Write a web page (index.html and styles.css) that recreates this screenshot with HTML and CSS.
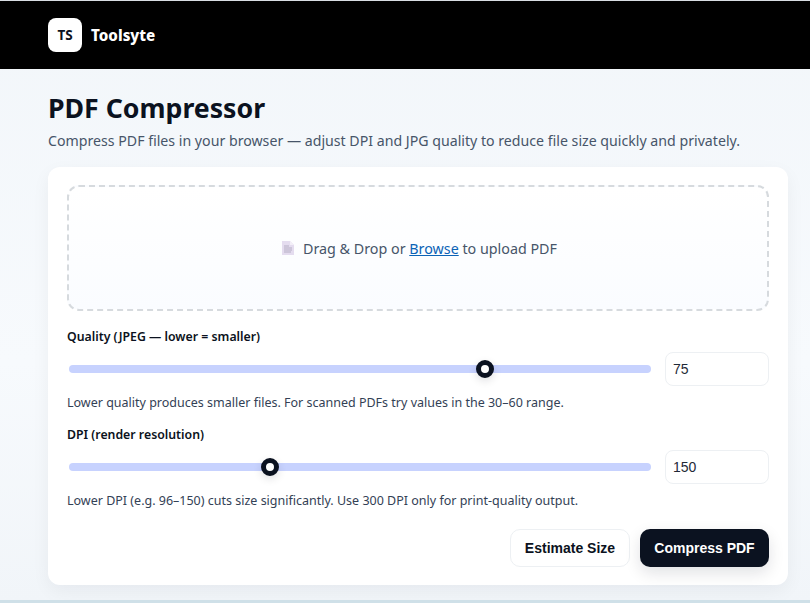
FILE: index.html
```html
<!DOCTYPE html>
<html lang="en">
<head>
    <meta charset="UTF-8">
    <title>PDF Compressor</title>
    <link rel="stylesheet" href="styles.css">
</head>
<body>
    <header class="topbar">
        <div class="logo">TS</div>
        <span class="brand">Toolsyte</span>
    </header>
    <main class="wrap">
        <h1>PDF Compressor</h1>
        <p class="lead">Compress PDF files in your browser — adjust DPI and JPG quality to reduce file size quickly and privately.</p>
        <section class="card">
            <div class="drop">
                <svg class="file-icon" width="12" height="14" viewBox="0 0 12 14">
                    <path d="M0 0H8L12 4V14H0Z" fill="#e4dcef"/>
                    <path d="M8 0L12 4H8Z" fill="#f3eff8"/>
                    <path d="M2 5H7M2 7H10M2 9H10M2 11H9" stroke="#b5aec4" stroke-width="1"/>
                </svg>
                <span>Drag &amp; Drop or <a href="#">Browse</a> to upload PDF</span>
            </div>
            <label class="field-label">Quality (JPEG — lower = smaller)</label>
            <div class="slider-row">
                <input class="range" type="range" min="10" max="100" value="75">
                <input class="num" type="text" value="75">
            </div>
            <p class="hint">Lower quality produces smaller files. For scanned PDFs try values in the 30–60 range.</p>
            <label class="field-label">DPI (render resolution)</label>
            <div class="slider-row">
                <input class="range" type="range" min="72" max="301" value="150">
                <input class="num" type="text" value="150">
            </div>
            <p class="hint">Lower DPI (e.g. 96–150) cuts size significantly. Use 300 DPI only for print-quality output.</p>
            <div class="actions">
                <button class="btn btn-light">Estimate Size</button>
                <button class="btn btn-dark">Compress PDF</button>
            </div>
        </section>
    </main>
    <div class="edge"></div>
</body>
</html>
```

FILE: styles.css
```css
* {
    margin: 0;
    padding: 0;
    box-sizing: border-box;
}
html, body {
    height: 603px;
    overflow: hidden;
}
body {
    font-family: "Noto Sans", "Open Sans", sans-serif;
    color: #0b1220;
    background: linear-gradient(180deg, #f2f6fa 0%, #f7fafd 60%, #f1f5f9 100%);
    position: relative;
}
.topbar {
    height: 69px;
    background: #000;
    border-top: 1px solid #d8dde2;
    display: flex;
    align-items: center;
    gap: 9px;
    padding: 0 48px;
}
.logo {
    width: 34px;
    height: 34px;
    background: #fff;
    border-radius: 8px;
    display: flex;
    align-items: center;
    justify-content: center;
    font-size: 13.5px;
    font-weight: 700;
    color: #0b1220;
}
.brand {
    color: #fff;
    font-size: 15.2px;
    font-weight: 800;
}
.wrap {
    padding: 20px 22px 0 48px;
}
h1 {
    font-size: 26.7px;
    line-height: 38px;
    font-weight: 700;
    color: #0b1220;
}
.lead {
    font-size: 14.16px;
    line-height: 22px;
    margin-top: 3px;
    color: #475569;
}
.card {
    margin-top: 15px;
    height: 418px;
    background: #fff;
    border-radius: 12px;
    padding: 18px 19px;
    box-shadow: 0 6px 18px rgba(15, 23, 42, 0.05);
}
.drop {
    height: 126px;
    border: 2px dashed #d6dade;
    border-radius: 12px;
    background: linear-gradient(180deg, #fff, #fafcff);
    display: flex;
    align-items: center;
    justify-content: center;
    gap: 9px;
    font-size: 14.3px;
    color: #475569;
}
.file-icon {
    margin-left: 3px;
}
.drop a {
    color: #0b63b6;
}
.field-label {
    display: block;
    font-size: 12.3px;
    line-height: 18px;
    font-weight: 600;
    color: #0b1220;
    padding-top: 1px;
    height: 18px;
}
.drop + .field-label {
    margin-top: 16px;
}
.slider-row {
    display: flex;
    align-items: center;
    gap: 14px;
    margin-top: 7px;
}
.range {
    -webkit-appearance: none;
    appearance: none;
    flex: 1;
    height: 8px;
    border-radius: 4px;
    background: #c7d2fe;
    outline: none;
    margin: 0 0 0 2px;
}
.range::-webkit-slider-thumb {
    -webkit-appearance: none;
    width: 18px;
    height: 18px;
    border-radius: 50%;
    background: #fff;
    border: 5px solid #0b1220;
    box-shadow: 0 3px 8px rgba(11, 18, 32, 0.12);
}
.num {
    width: 104px;
    height: 34px;
    border: 1px solid #edf0f3;
    border-radius: 8px;
    padding: 0 7px;
    font-family: "Liberation Sans", Arial, sans-serif;
    font-size: 14px;
    color: #1f2937;
    background: #fff;
}
.hint {
    font-size: 12.5px;
    line-height: 18px;
    margin-top: 8px;
    margin-bottom: 13px;
    color: #334155;
}
.actions {
    display: flex;
    justify-content: flex-end;
    gap: 10px;
    margin-top: 19px;
}
.btn {
    height: 38px;
    border-radius: 10px;
    font-family: "Liberation Sans", Arial, sans-serif;
    font-size: 14px;
    font-weight: 700;
    padding: 0;
    white-space: nowrap;
    border: 1px solid transparent;
}
.btn-light {
    width: 120px;
    background: #fff;
    border-color: #edf0f3;
    color: #0b1220;
}
.btn-dark {
    width: 129px;
    background: #0b1220;
    color: #fff;
    box-shadow: 0 6px 16px rgba(11, 18, 32, 0.12);
}
.edge {
    position: absolute;
    left: 0;
    right: 0;
    bottom: 0;
    height: 3px;
    background: #cfe0e8;
}
```
